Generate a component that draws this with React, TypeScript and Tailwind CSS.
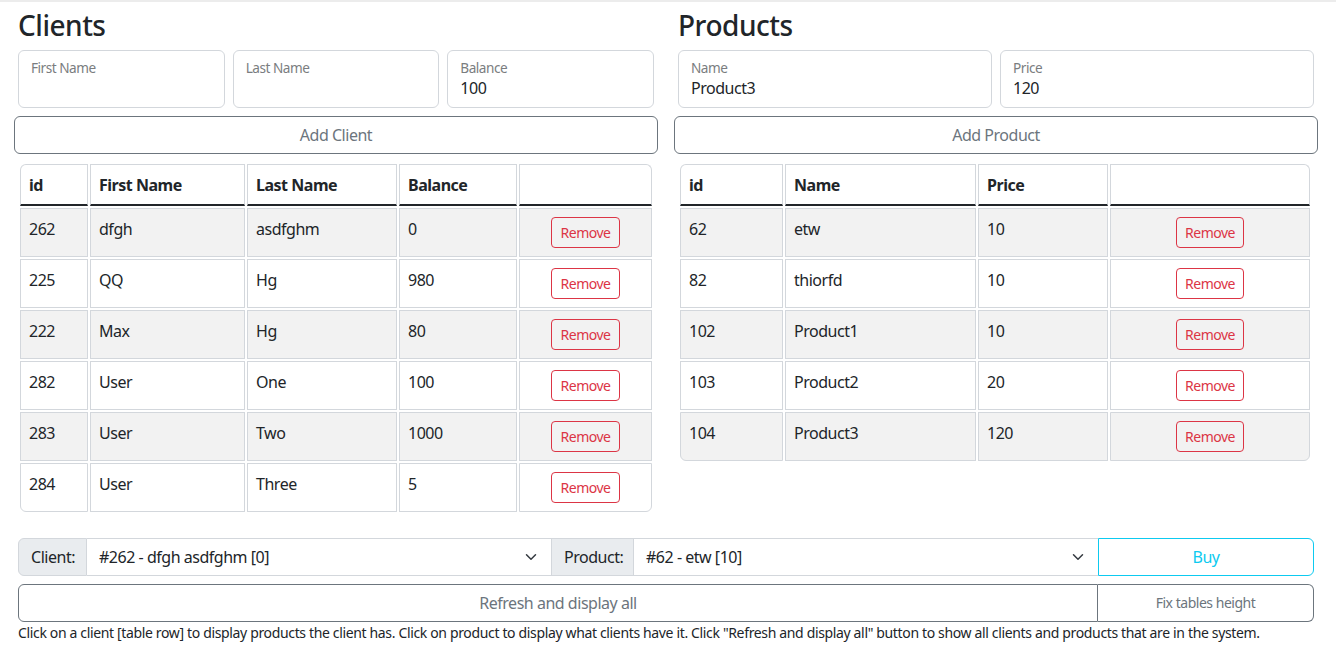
import React from 'react';

type Client = { id: number; first: string; last: string; balance: number };
type Product = { id: number; name: string; price: number };

const clients: Client[] = [
  { id: 262, first: 'dfgh', last: 'asdfghm', balance: 0 },
  { id: 225, first: 'QQ', last: 'Hg', balance: 980 },
  { id: 222, first: 'Max', last: 'Hg', balance: 80 },
  { id: 282, first: 'User', last: 'One', balance: 100 },
  { id: 283, first: 'User', last: 'Two', balance: 1000 },
  { id: 284, first: 'User', last: 'Three', balance: 5 },
];

const products: Product[] = [
  { id: 62, name: 'etw', price: 10 },
  { id: 82, name: 'thiorfd', price: 10 },
  { id: 102, name: 'Product1', price: 10 },
  { id: 103, name: 'Product2', price: 20 },
  { id: 104, name: 'Product3', price: 120 },
];

const font = { fontFamily: '"Noto Sans", "Open Sans", "Liberation Sans", sans-serif' };

function FloatingInput({ label, value = '' }: { label: string; value?: string }) {
  return (
    <div className="flex h-[58px] flex-1 flex-col rounded-md border border-[#d3d7dc] bg-white px-3 pt-[9px]">
      <span className="text-[13.6px] leading-[16px] text-[#7a7d80]">{label}</span>
      <span className="text-base leading-6 text-[#212529]">{value}</span>
    </div>
  );
}

function OutlineButton({ children }: { children: React.ReactNode }) {
  return (
    <button className="mt-2 h-[38px] w-full rounded-md border border-[#6c757d] bg-white text-base text-[#6c757d]">
      {children}
    </button>
  );
}

function RemoveButton() {
  return (
    <button className="h-[31px] rounded border border-[#dc3545] px-2 text-sm text-[#dc3545]">Remove</button>
  );
}

const cellBase = 'border border-[#d3d7dc] px-2 pt-2 align-top';

function DataTable({
  headers,
  widths,
  rows,
}: {
  headers: string[];
  widths: number[];
  rows: (string | number)[][];
}) {
  const last = headers.length;
  const total = widths.reduce((a, b) => a + b, 0) + (widths.length + 1) * 2;
  return (
    <table className="mt-2 table-fixed border-separate border-spacing-[2px]" style={{ width: total }}>
      <colgroup>
        {widths.map((w, i) => (
          <col key={i} style={{ width: w }} />
        ))}
      </colgroup>
      <thead>
        <tr>
          {[...headers, ''].map((h, i) => (
            <th
              key={i}
              className={`${cellBase} h-[42px] border-b-2 border-b-[#212529] text-left font-bold ${i === 0 ? 'rounded-tl-md' : ''} ${i === last ? 'rounded-tr-md' : ''}`}
            >
              {h}
            </th>
          ))}
        </tr>
      </thead>
      <tbody>
        {rows.map((r, ri) => {
          const isLast = ri === rows.length - 1;
          const bg = ri % 2 === 0 ? 'bg-[#f2f2f2]' : 'bg-white';
          return (
            <tr key={ri}>
              {r.map((c, ci) => (
                <td
                  key={ci}
                  className={`${cellBase} ${bg} h-[49px] text-left ${isLast && ci === 0 ? 'rounded-bl-md' : ''}`}
                >
                  {c}
                </td>
              ))}
              <td className={`${cellBase} ${bg} h-[49px] text-center ${isLast ? 'rounded-br-md' : ''}`}>
                <RemoveButton />
              </td>
            </tr>
          );
        })}
      </tbody>
    </table>
  );
}

function Chevron() {
  return (
    <svg width="16" height="12" viewBox="0 0 16 16" className="shrink-0">
      <path d="m2 5 6 6 6-6" fill="none" stroke="#343a40" strokeWidth="2" strokeLinecap="round" strokeLinejoin="round" />
    </svg>
  );
}

export default function App() {
  return (
    <div className="min-h-screen border-t-2 border-[#ececec] bg-white tracking-[-0.03em] text-[#212529]" style={font}>
      <div className="flex gap-4 px-[14px]">
        {/* Clients */}
        <div className="w-[644px]">
          <h3 className="mt-[6px] mb-2 px-1 text-[28px] leading-[34px] font-medium">Clients</h3>
          <div className="flex gap-2 px-1">
            <FloatingInput label="First Name" />
            <FloatingInput label="Last Name" />
            <FloatingInput label="Balance" value="100" />
          </div>
          <OutlineButton>Add Client</OutlineButton>
          <div className="px-1">
            <DataTable
              headers={['id', 'First Name', 'Last Name', 'Balance']}
              widths={[68, 155, 150, 118, 133]}
              rows={clients.map((c) => [c.id, c.first, c.last, c.balance])}
            />
          </div>
        </div>

        {/* Products */}
        <div className="w-[644px]">
          <h3 className="mt-[6px] mb-2 px-1 text-[28px] leading-[34px] font-medium">Products</h3>
          <div className="flex gap-2 px-1">
            <FloatingInput label="Name" value="Product3" />
            <FloatingInput label="Price" value="120" />
          </div>
          <OutlineButton>Add Product</OutlineButton>
          <div className="px-1">
            <DataTable
              headers={['id', 'Name', 'Price']}
              widths={[103, 191, 130, 200]}
              rows={products.map((p) => [p.id, p.name, p.price])}
            />
          </div>
        </div>
      </div>

      {/* Purchase controls */}
      <div className="mt-6 px-[18px]">
        <div className="flex h-[38px] w-[1296px]">
          <div className="flex w-[69px] items-center rounded-l-md border border-[#d3d7dc] bg-[#e9ecef] px-3">Client:</div>
          <div className="flex flex-1 items-center justify-between border-y border-[#d3d7dc] pl-3 pr-3">
            <span>#262 - dfgh asdfghm [0]</span>
            <Chevron />
          </div>
          <div className="flex w-[83px] items-center border border-[#d3d7dc] bg-[#e9ecef] px-3">Product:</div>
          <div className="flex w-[464px] items-center justify-between border-y border-[#d3d7dc] pl-3 pr-3">
            <span>#62 - etw [10]</span>
            <Chevron />
          </div>
          <button className="w-[216px] rounded-r-md border border-[#0dcaf0] text-[#0dcaf0]">Buy</button>
        </div>
        <div className="mt-2 flex h-[38px] w-[1296px]">
          <button className="flex-1 rounded-l-md border border-[#6c757d] text-[#6c757d]">Refresh and display all</button>
          <button className="w-[216px] rounded-r-md border border-l-0 border-[#6c757d] text-sm text-[#6c757d]">Fix tables height</button>
        </div>
        <p className="text-sm leading-[21px] tracking-[-0.025em]">
          Click on a client [table row] to display products the client has. Click on product to display what clients have it. Click "Refresh and display all" button to show all clients and products that are in the system.
        </p>
      </div>
    </div>
  );
}
